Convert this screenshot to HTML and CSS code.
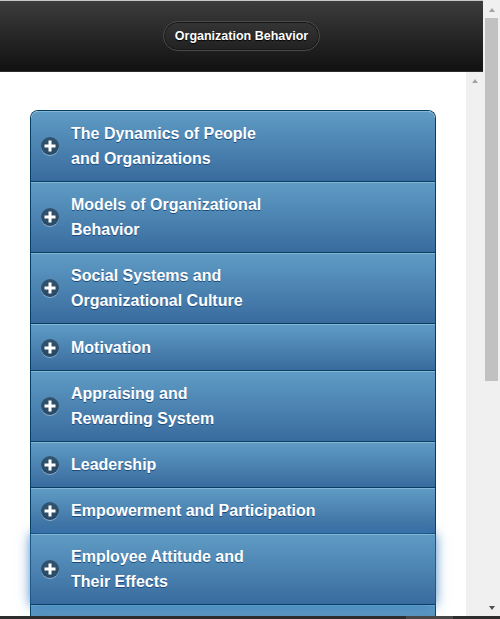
FILE: index.html
```html
<!DOCTYPE html>
<html lang="en">
<head>
<meta charset="utf-8">
<title>Organization Behavior</title>
<link rel="stylesheet" href="styles.css">
</head>
<body>
<div class="frame">
  <div class="main">
    <header class="hdr">
      <span class="title">Organization Behavior</span>
    </header>
    <div class="body-row">
      <div class="content">
        <div class="set">
          <div class="item first"><span class="icon"><svg width="18" height="18" viewBox="0 0 18 18"><rect x="3.5" y="7.5" width="11" height="3" fill="#fff"/><rect x="7.5" y="3.5" width="3" height="11" fill="#fff"/></svg></span><span class="label">The Dynamics of People<br>and Organizations</span></div>
          <div class="item"><span class="icon"><svg width="18" height="18" viewBox="0 0 18 18"><rect x="3.5" y="7.5" width="11" height="3" fill="#fff"/><rect x="7.5" y="3.5" width="3" height="11" fill="#fff"/></svg></span><span class="label">Models of Organizational<br>Behavior</span></div>
          <div class="item"><span class="icon"><svg width="18" height="18" viewBox="0 0 18 18"><rect x="3.5" y="7.5" width="11" height="3" fill="#fff"/><rect x="7.5" y="3.5" width="3" height="11" fill="#fff"/></svg></span><span class="label">Social Systems and<br>Organizational Culture</span></div>
          <div class="item single tall"><span class="icon"><svg width="18" height="18" viewBox="0 0 18 18"><rect x="3.5" y="7.5" width="11" height="3" fill="#fff"/><rect x="7.5" y="3.5" width="3" height="11" fill="#fff"/></svg></span><span class="label">Motivation</span></div>
          <div class="item"><span class="icon"><svg width="18" height="18" viewBox="0 0 18 18"><rect x="3.5" y="7.5" width="11" height="3" fill="#fff"/><rect x="7.5" y="3.5" width="3" height="11" fill="#fff"/></svg></span><span class="label">Appraising and<br>Rewarding System</span></div>
          <div class="item single"><span class="icon"><svg width="18" height="18" viewBox="0 0 18 18"><rect x="3.5" y="7.5" width="11" height="3" fill="#fff"/><rect x="7.5" y="3.5" width="3" height="11" fill="#fff"/></svg></span><span class="label">Leadership</span></div>
          <div class="item single"><span class="icon"><svg width="18" height="18" viewBox="0 0 18 18"><rect x="3.5" y="7.5" width="11" height="3" fill="#fff"/><rect x="7.5" y="3.5" width="3" height="11" fill="#fff"/></svg></span><span class="label">Empowerment and Participation</span></div>
          <div class="item focus"><span class="icon"><svg width="18" height="18" viewBox="0 0 18 18"><rect x="3.5" y="7.5" width="11" height="3" fill="#fff"/><rect x="7.5" y="3.5" width="3" height="11" fill="#fff"/></svg></span><span class="label">Employee Attitude and<br>Their Effects</span></div>
          <div class="item tail"></div>
        </div>
      </div>
      <div class="vtrack inner"><span class="arrow up"></span></div>
    </div>
  </div>
  <div class="vtrack outer">
    <span class="arrow up"></span>
    <span class="thumb"></span>
    <span class="spacer"></span>
    <span class="arrow down"></span>
  </div>
</div>
<div class="hbar"><span class="hseg"></span></div>
</body>
</html>
```
FILE: styles.css
```css
html, body {
  margin: 0;
  padding: 0;
}
body {
  width: 500px;
  height: 619px;
  overflow: hidden;
  background: #fff;
  font-family: "Liberation Sans", Arial, Helvetica, sans-serif;
}
.frame {
  display: flex;
  height: 616px;
}
.main {
  width: 483px;
  display: flex;
  flex-direction: column;
}
.hdr {
  height: 70px;
  flex: none;
  border-top: 1px solid #c8c8c8;
  border-bottom: 1px solid #2e2e2e;
  background: linear-gradient(#3c3c3c, #111111);
  display: flex;
  align-items: center;
  justify-content: center;
}
.title {
  box-sizing: border-box;
  height: 30px;
  line-height: 28px;
  padding: 0 10.5px;
  border: 1px solid #4c4c4c;
  border-radius: 15px;
  background: linear-gradient(#353535, #212121);
  box-shadow: inset 0 0 0 1px #161616;
  color: #fff;
  font-weight: bold;
  font-size: 12.5px;
  text-shadow: 0 1px 1px #000;
}
.body-row {
  flex: 1;
  display: flex;
  min-height: 0;
}
.content {
  flex: 1;
  overflow: hidden;
  padding: 38px 30px 0 30px;
  background: #fff;
}
.set {
  border: 1px solid #044062;
  border-bottom: none;
  border-radius: 8px 8px 0 0;
}
.item {
  display: flex;
  align-items: center;
  gap: 12px;
  padding: 10px;
  border-bottom: 1px solid #044062;
  background: linear-gradient(#5f9cc5, #396b9e);
  box-shadow: inset 0 1px 0 rgba(255, 255, 255, 0.25);
  color: #fff;
  font-weight: bold;
  font-size: 16px;
  line-height: 25px;
  text-shadow: 0 1px 0 #194b7e;
}
.item.single {
  padding-top: 10px;
  padding-bottom: 10px;
}
.item.single.tall {
  padding-top: 11px;
}
.item.first {
  border-radius: 7px 7px 0 0;
}
.item.focus {
  position: relative;
  z-index: 1;
  box-shadow: 0 0 12px #387bbe, inset 0 1px 0 rgba(255, 255, 255, 0.25);
}
.item.tail {
  height: 50px;
}
.icon {
  flex: none;
  width: 18px;
  height: 18px;
  border-radius: 9px;
  background: rgba(0, 0, 0, 0.4);
  box-shadow: 0 1px 0 rgba(255, 255, 255, 0.4);
  display: flex;
}
.icon svg {
  display: block;
}
.vtrack {
  width: 17px;
  flex: none;
  background: #f0f0f0;
  display: flex;
  flex-direction: column;
  align-items: center;
}
.vtrack.inner {
  padding-top: 7px;
}
.vtrack.outer {
  padding-top: 8px;
  padding-bottom: 6px;
}
.arrow {
  width: 0;
  height: 0;
  border-left: 3.5px solid transparent;
  border-right: 3.5px solid transparent;
}
.arrow.up {
  border-bottom: 4px solid #a3a3a3;
}
.arrow.down {
  border-top: 4px solid #505050;
}
.thumb {
  width: 13px;
  height: 363px;
  margin-top: 6px;
  background: #c1c1c1;
}
.spacer {
  flex: 1;
}
.hbar {
  height: 3px;
  background: #2d2d2d;
  display: flex;
}
.hseg {
  margin-left: 406px;
  width: 47px;
  background: #474747;
}
```
